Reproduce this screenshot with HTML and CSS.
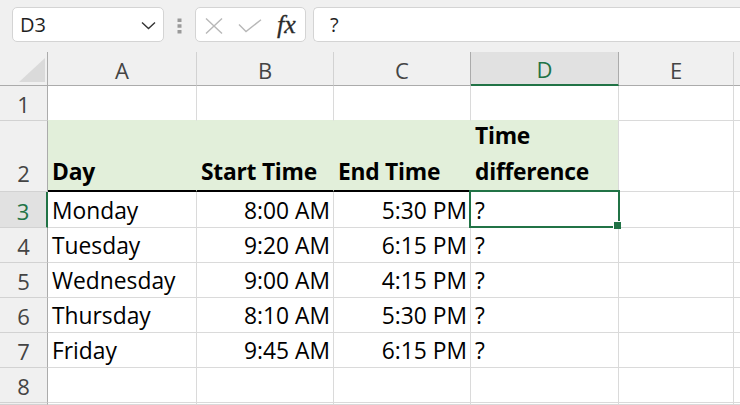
FILE: index.html
```html
<!DOCTYPE html>
<html>
<head>
<meta charset="utf-8">
<link rel="stylesheet" href="styles.css">
</head>
<body>
<div class="toolbar">
  <div class="namebox">
    <span class="ref">D3</span>
    <svg class="chev" width="15" height="9" viewBox="0 0 15 9"><path d="M1 1.5 L7.5 7.5 L14 1.5" fill="none" stroke="#333" stroke-width="1.4"/></svg>
  </div>
  <div class="grip">
    <svg width="5" height="16" viewBox="0 0 5 16"><rect x="0.5" y="0.5" width="4" height="3.5" fill="#9a9a9a"/><rect x="0.5" y="6.25" width="4" height="3.5" fill="#9a9a9a"/><rect x="0.5" y="12" width="4" height="3.5" fill="#9a9a9a"/></svg>
  </div>
  <div class="fbtns">
    <svg class="ico" width="18" height="16" viewBox="0 0 18 16"><path d="M1 0.5 L17 15.5 M17 0.5 L1 15.5" fill="none" stroke="#b8b8b8" stroke-width="1.4"/></svg>
    <svg class="ico" width="24" height="14" viewBox="0 0 24 14"><path d="M1 5.5 L8 12.5 L23 0.8" fill="none" stroke="#b8b8b8" stroke-width="1.4"/></svg>
    <span class="fx">fx</span>
  </div>
  <div class="finput">?</div>
</div>
<div class="sheet">
  <div class="c corner"><svg width="26" height="24" viewBox="0 0 26 24"><polygon points="26,0 26,24 0,24" fill="#dadada"/></svg></div>
  <div class="c ch">A</div>
  <div class="c ch">B</div>
  <div class="c ch pre">C</div>
  <div class="c ch cur">D</div>
  <div class="c ch">E</div>
  <div class="c ch last"></div>

  <div class="c rh">1</div>
  <div class="c top"></div><div class="c top"></div><div class="c top"></div><div class="c top"></div><div class="c"></div><div class="c"></div>

  <div class="c rh r2">2</div>
  <div class="c hd thick">Day</div>
  <div class="c hd thick">Start Time</div>
  <div class="c hd thick">End Time</div>
  <div class="c hd wrap">Time<br>difference</div>
  <div class="c"></div><div class="c"></div>

  <div class="c rh cur">3</div>
  <div class="c">Monday</div>
  <div class="c r">8:00 AM</div>
  <div class="c r">5:30 PM</div>
  <div class="c sel">?<span class="handle"></span></div>
  <div class="c"></div><div class="c"></div>

  <div class="c rh">4</div>
  <div class="c">Tuesday</div>
  <div class="c r">9:20 AM</div>
  <div class="c r">6:15 PM</div>
  <div class="c">?</div>
  <div class="c"></div><div class="c"></div>

  <div class="c rh">5</div>
  <div class="c">Wednesday</div>
  <div class="c r">9:00 AM</div>
  <div class="c r">4:15 PM</div>
  <div class="c">?</div>
  <div class="c"></div><div class="c"></div>

  <div class="c rh">6</div>
  <div class="c">Thursday</div>
  <div class="c r">8:10 AM</div>
  <div class="c r">5:30 PM</div>
  <div class="c">?</div>
  <div class="c"></div><div class="c"></div>

  <div class="c rh">7</div>
  <div class="c">Friday</div>
  <div class="c r">9:45 AM</div>
  <div class="c r">6:15 PM</div>
  <div class="c">?</div>
  <div class="c"></div><div class="c"></div>

  <div class="c rh">8</div>
  <div class="c"></div><div class="c"></div><div class="c"></div><div class="c"></div><div class="c"></div><div class="c"></div>

  <div class="c rh"></div>
  <div class="c"></div><div class="c"></div><div class="c"></div><div class="c"></div><div class="c"></div><div class="c"></div>
</div>
</body>
</html>
```

FILE: styles.css
```css
* { box-sizing: border-box; }
html, body { margin: 0; padding: 0; }
body {
  width: 740px;
  height: 405px;
  overflow: hidden;
  background: #f0f0f0;
  font-family: "Open Sans", "Noto Sans", sans-serif;
}

/* ---------- formula toolbar ---------- */
.toolbar {
  height: 52px;
  display: flex;
  align-items: flex-start;
  padding: 7px 0 0 12px;
  background: #f0f0f0;
}
.namebox {
  width: 152px;
  height: 35px;
  background: #fff;
  border: 1px solid #d4d4d4;
  border-radius: 5px;
  display: flex;
  align-items: center;
  justify-content: space-between;
  padding: 0 7px 0 7px;
  font-size: 20px;
  color: #1f1f1f;
}
.chev { margin-top: 1px; }
.grip {
  width: 31px;
  height: 35px;
  display: flex;
  align-items: center;
  justify-content: center;
  padding-top: 2px;
}
.fbtns {
  width: 111px;
  height: 35px;
  background: #fff;
  border: 1px solid #d4d4d4;
  border-radius: 5px;
  display: flex;
  align-items: center;
  gap: 15px;
  padding-left: 9px;
}
.ico { margin-top: 2px; }
.fx {
  font-family: "Liberation Serif", "DejaVu Serif", serif;
  font-style: italic;
  font-size: 26px;
  color: #2b2b2b;
  margin-left: 0;
  line-height: 1;
  -webkit-text-stroke: 0.3px #2b2b2b;
}
.finput {
  flex: 1;
  height: 35px;
  margin-left: 7px;
  background: #fff;
  border: 1px solid #d4d4d4;
  border-right: none;
  border-radius: 5px 0 0 5px;
  padding-left: 16px;
  font-size: 20px;
  color: #1f1f1f;
  display: flex;
  align-items: center;
}

/* ---------- grid ---------- */
.sheet {
  display: grid;
  grid-template-columns: 48px 149px 137px 137px 148px 115px 1fr;
  grid-template-rows: 34px 35px 71px 36px 35px 35px 35px 35px 35px 2px;
  background: #fff;
}
.c {
  border-right: 1px solid #dadada;
  border-bottom: 1px solid #dadada;
  display: flex;
  align-items: flex-end;
  padding: 0 3px 1px 4px;
  font-size: 22.8px;
  line-height: 30px;
  color: #000;
  white-space: nowrap;
  background: #fff;
  overflow: hidden;
}
.r { justify-content: flex-end; }

.hd {
  background: #e2efda;
  font-weight: 700;
  border-right-color: #e2efda;
  padding-bottom: 3px;
  letter-spacing: -0.25px;
}
.thick { border-bottom: 2px solid #000; }
.wrap {
  white-space: normal;
  line-height: 36px;
  padding-bottom: 1px;
  border-right-color: #dadada;
}
.top { border-bottom-color: #e2efda; }

/* headers */
.corner {
  background: #f0f0f0;
  border-right: 1px solid #ababab;
  border-bottom: 1px solid #ababab;
  justify-content: flex-end;
  padding: 0 2px 3px 0;
}
.ch {
  background: #f0f0f0;
  border-right: 1px solid #d2d2d2;
  border-bottom: 1px solid #ababab;
  justify-content: center;
  align-items: center;
  padding: 2px 0 0 0;
  color: #444;
  font-size: 22px;
}
.ch.pre { border-right-color: #ababab; }
.ch.cur {
  background: #e1e1e1;
  color: #217346;
  border-right-color: #ababab;
  border-bottom: 2px solid #217346;
}
.ch.last { border-right: none; }
.rh {
  background: #f0f0f0;
  border-right: 1px solid #ababab;
  border-bottom: 1px solid #d2d2d2;
  justify-content: center;
  padding: 0 0 1px 0;
  color: #444;
  font-size: 22px;
}
.rh.r2 { padding-bottom: 3px; }
.rh.cur {
  background: #e1e1e1;
  color: #217346;
  border-right: 2px solid #217346;
}

/* selection */
.sel { position: relative; overflow: visible; }
.sel::after {
  content: "";
  position: absolute;
  left: -2px;
  top: -2px;
  right: -2px;
  bottom: -1px;
  border: 2px solid #217346;
  pointer-events: none;
}
.handle {
  position: absolute;
  right: -3px;
  bottom: -2px;
  width: 8px;
  height: 8px;
  background: #217346;
  border: 1px solid #fff;
  border-right: none;
  border-bottom: none;
  z-index: 1;
}
```
